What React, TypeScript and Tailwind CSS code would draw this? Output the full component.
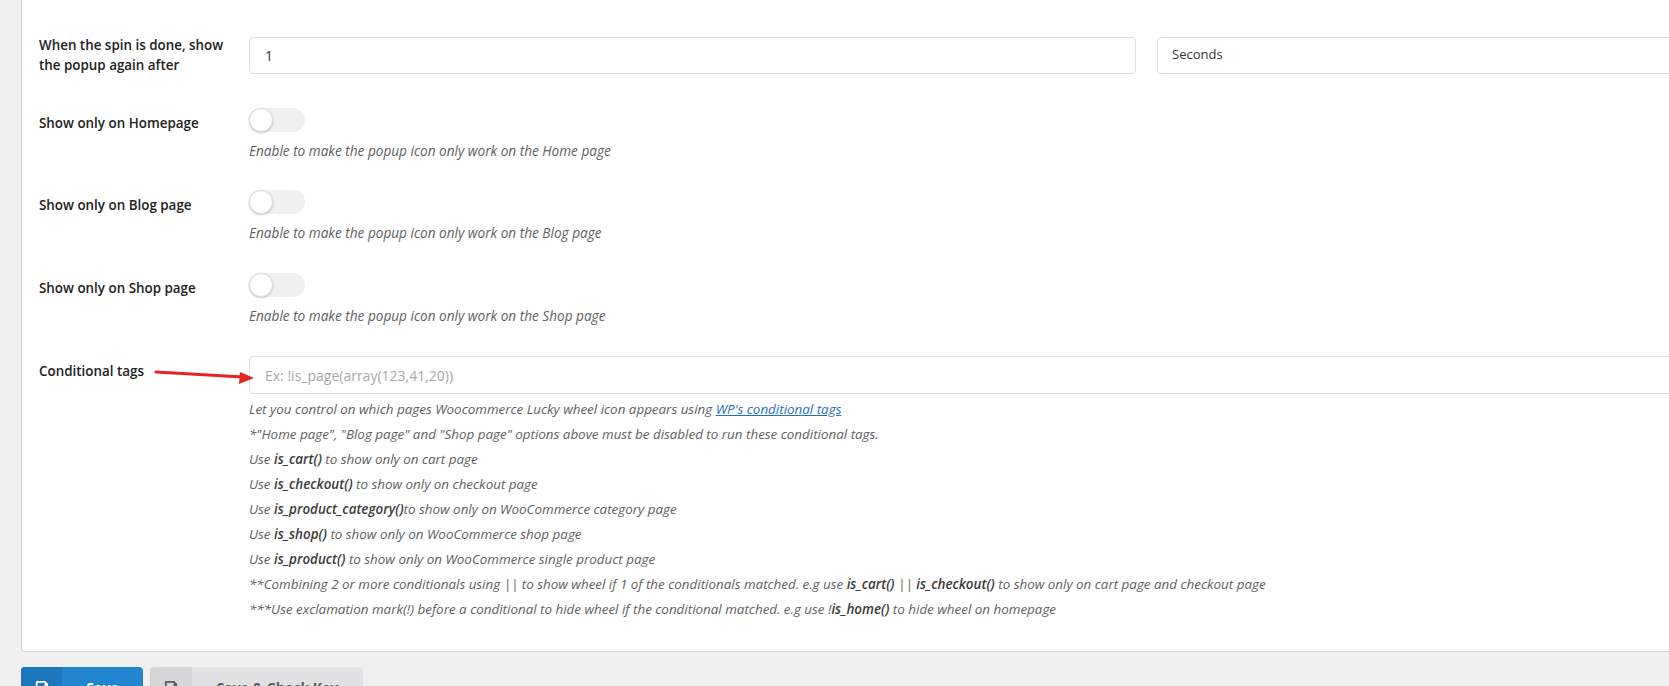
import { FaSave } from "react-icons/fa"

const font = { fontFamily: '"Open Sans", "Liberation Sans", sans-serif' }

function Toggle() {
    return (
        <div className="relative h-[24px] w-[56px] rounded-full bg-[#f0f0f0]">
            <div className="absolute left-0 top-0 h-[24px] w-[24px] rounded-full border border-[#dcdcdc] bg-white shadow-[0_1px_2px_rgba(34,36,38,0.25)]" />
        </div>
    )
}

function ToggleRow({ label, help, top }: { label: string; help: string; top: string }) {
    return (
        <div className={`flex ${top}`}>
            <div className="w-[210px] shrink-0 pt-[5px] text-[13.4px] font-semibold leading-[20px] text-[#212121]">
                {label}
            </div>
            <div className="flex flex-col">
                <Toggle />
                <p className="mt-[9px] text-[13.6px] italic leading-[20px] text-[#606060]">{help}</p>
            </div>
        </div>
    )
}

function HelpLine({ children }: { children: React.ReactNode }) {
    return <p className="text-[13.4px] italic leading-[25px] text-[#606060]">{children}</p>
}

function B({ children }: { children: React.ReactNode }) {
    return <b className="font-semibold text-[#3a3a3a]">{children}</b>
}

export default function App() {
    return (
        <div className="relative h-[686px] w-[1669px] overflow-hidden bg-[#f0f0f0]" style={font}>
            <div className="ml-[21px] w-[2200px] rounded-b-[4px] border border-t-0 border-[#d9d9d9] bg-white pb-[29px] pl-[17px]">
                {/* popup again after */}
                <div className="flex items-center pt-[35px]">
                    <div className="w-[210px] shrink-0 text-[13.4px] font-semibold leading-[20px] text-[#212121]">
                        When the spin is done, show
                        <br />
                        the popup again after
                    </div>
                    <div className="flex gap-[21px]">
                        <div className="flex h-[37px] w-[887px] items-center rounded-[4px] border border-[#dedede] px-[15px] text-[14px] text-[#333]">
                            1
                        </div>
                        <div className="flex h-[37px] w-[887px] items-center rounded-[4px] border border-[#dedede] px-[14px] text-[13px] text-[#333]">
                            Seconds
                        </div>
                    </div>
                </div>

                <ToggleRow
                    top="mt-[33px]"
                    label="Show only on Homepage"
                    help="Enable to make the popup icon only work on the Home page"
                />
                <ToggleRow
                    top="mt-[29px]"
                    label="Show only on Blog page"
                    help="Enable to make the popup icon only work on the Blog page"
                />
                <ToggleRow
                    top="mt-[30px]"
                    label="Show only on Shop page"
                    help="Enable to make the popup icon only work on the Shop page"
                />

                {/* conditional tags */}
                <div className="mt-[30px] flex">
                    <div className="w-[210px] shrink-0 pt-[5px] text-[13.4px] font-semibold leading-[20px] text-[#212121]">
                        Conditional tags
                    </div>
                    <div className="flex flex-1 flex-col">
                        <div className="flex h-[38px] items-center rounded-[4px] border border-[#dedede] px-[15px] text-[14px] text-[#a8a8a8]">
                            Ex: !is_page(array(123,41,20))
                        </div>
                        <div className="mt-[3px]">
                            <HelpLine>
                                Let you control on which pages Woocommerce Lucky wheel icon appears using{" "}
                                <a className="text-[#1e70bf] underline">WP's conditional tags</a>
                            </HelpLine>
                            <HelpLine>
                                *"Home page", "Blog page" and "Shop page" options above must be disabled to run these conditional tags.
                            </HelpLine>
                            <HelpLine>
                                Use <B>is_cart()</B> to show only on cart page
                            </HelpLine>
                            <HelpLine>
                                Use <B>is_checkout()</B> to show only on checkout page
                            </HelpLine>
                            <HelpLine>
                                Use <B>is_product_category()</B>to show only on WooCommerce category page
                            </HelpLine>
                            <HelpLine>
                                Use <B>is_shop()</B> to show only on WooCommerce shop page
                            </HelpLine>
                            <HelpLine>
                                Use <B>is_product()</B> to show only on WooCommerce single product page
                            </HelpLine>
                            <HelpLine>
                                **Combining 2 or more conditionals using || to show wheel if 1 of the conditionals matched. e.g use{" "}
                                <B>is_cart()</B> || <B>is_checkout()</B> to show only on cart page and checkout page
                            </HelpLine>
                            <HelpLine>
                                ***Use exclamation mark(!) before a conditional to hide wheel if the conditional matched. e.g use !
                                <B>is_home()</B> to hide wheel on homepage
                            </HelpLine>
                        </div>
                    </div>
                </div>
            </div>

            {/* buttons */}
            <div className="ml-[21px] mt-[15px] flex gap-[7px]">
                <button className="flex h-[37px] w-[122px] items-stretch overflow-hidden rounded-[4px] bg-[#2185d0] text-[14px] font-bold text-white">
                    <span className="flex w-[41px] items-start justify-center bg-[#1c77bd] pt-[13px]">
                        <FaSave className="h-[14px] w-[14px]" />
                    </span>
                    <span className="flex flex-1 items-start justify-center pt-[10px]">Save</span>
                </button>
                <button className="flex h-[37px] w-[213px] items-stretch overflow-hidden rounded-[4px] bg-[#e0e1e2] text-[14px] font-bold text-[#5a5a5a]">
                    <span className="flex w-[42px] items-start justify-center bg-[#d4d5d6] pt-[13px]">
                        <FaSave className="h-[14px] w-[14px]" />
                    </span>
                    <span className="flex flex-1 items-start justify-center pt-[10px]">Save &amp; Check Key</span>
                </button>
            </div>

            {/* annotation arrow */}
            <svg className="absolute left-[150px] top-[364px]" width="112" height="24" viewBox="0 0 112 24">
                <line x1="6" y1="8" x2="93" y2="13" stroke="#e52421" strokeWidth="3" strokeLinecap="round" />
                <polygon points="104,14 90,8 89,20" fill="#e52421" />
            </svg>
        </div>
    )
}
